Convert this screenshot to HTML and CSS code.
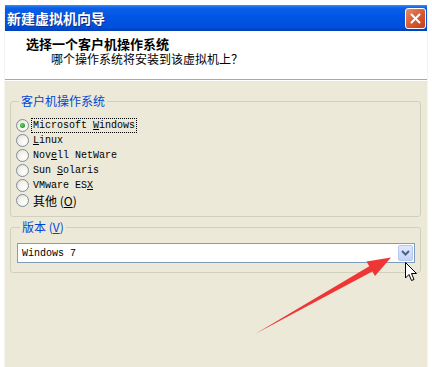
FILE: index.html
```html
<!DOCTYPE html>
<html lang="zh-CN">
<head>
    <meta charset="UTF-8">
    <title>新建虚拟机向导</title>
    <link rel="stylesheet" href="styles.css">
</head>
<body>
    <div class="window">
        <div class="titlebar">
            <span class="title">新建虚拟机向导</span>
            <span class="close">
                <svg width="11" height="11" viewBox="0 0 11 11"><path d="M1.5 1.5 L9.5 9.5 M9.5 1.5 L1.5 9.5" stroke="#fff" stroke-width="2" stroke-linecap="round"/></svg>
            </span>
        </div>

        <div class="header">
            <h1>选择一个客户机操作系统</h1>
            <p>哪个操作系统将安装到该虚拟机上？</p>
        </div>

        <div class="content">
            <fieldset class="group">
                <legend>客户机操作系统</legend>
                <div class="radios">
                    <label class="radio checked"><span class="dot"></span><span class="label focus">Microsoft <u>W</u>indows</span></label>
                    <label class="radio"><span class="dot"></span><span class="label"><u>L</u>inux</span></label>
                    <label class="radio"><span class="dot"></span><span class="label">Nov<u>e</u>ll NetWare</span></label>
                    <label class="radio"><span class="dot"></span><span class="label">Sun <u>S</u>olaris</span></label>
                    <label class="radio"><span class="dot"></span><span class="label">VMware ES<u>X</u></span></label>
                    <label class="radio"><span class="dot"></span><span class="label cjk">其他 (<u>O</u>)</span></label>
                </div>
            </fieldset>

            <fieldset class="group version">
                <legend>版本 (<u>V</u>)</legend>
                <div class="combo">
                    <span class="combo-text">Windows 7</span>
                    <span class="combo-btn">
                        <svg width="9" height="6" viewBox="0 0 9 6"><path d="M1 1 L4.5 4.5 L8 1" fill="none" stroke="#4d6185" stroke-width="2"/></svg>
                    </span>
                </div>
            </fieldset>
        </div>
    </div>

    <!-- annotation arrow and mouse pointer drawn over the dialog -->
    <svg class="overlay" width="432" height="367" viewBox="0 0 432 367">
        <polygon points="255,334 369.3,266.2 366.5,261.5 391,257.5 375,276 372.3,271.4" fill="#ef3535"/>
        <path d="M405.5 262.5 L405.5 278 L409 274.5 L411.5 280.5 L414 279.5 L411.5 273.5 L416.5 273.5 Z" fill="#fff" stroke="#000" stroke-width="1" stroke-linejoin="miter"/>
    </svg>
</body>
</html>
```

FILE: styles.css
```css
:root {
    --beige: #ece9d8;
    --group-border: #d0d0bf;
    --legend: #0046d5;
    --combo-border: #7f9db9;
}
body {
    margin: 0;
    background: #fff;
    font-family: "Noto Sans CJK SC", sans-serif;
    font-size: 12px;
    color: #000;
    position: relative;
    height: 367px;
    overflow: hidden;
}
.window {
    margin: 5px 0 0 4px;
    width: 424px;
    height: 362px;
    background: var(--beige);
    border-left: 1px solid #f4f3ee;
    border-right: 1px solid #f4f3ee;
    box-sizing: border-box;
}
.titlebar {
    height: 26px;
    display: flex;
    align-items: center;
    justify-content: space-between;
    padding: 0 1px 0 2px;
    background: linear-gradient(#3a8cf6 0, #0b60e8 3px, #0055e5 45%, #004fdc 85%, #0040b8 100%);
}
.title {
    color: #fff;
    font-weight: bold;
    font-size: 14px;
    line-height: 16px;
    text-shadow: 1px 1px 0 #0a2f8c;
}
.close {
    width: 21px;
    height: 21px;
    box-sizing: border-box;
    border: 1px solid #fff;
    border-radius: 3px;
    background: linear-gradient(135deg, #e98a6a 0, #d9582f 55%, #c2401c 100%);
    display: flex;
    align-items: center;
    justify-content: center;
}
.header {
    background: #fff;
    height: 49px;
    padding: 6px 0 0 21px;
    box-sizing: border-box;
    border-bottom: 1px solid #aca899;
}
.header h1 {
    margin: 0;
    font-size: 13px;
    line-height: 14px;
    font-weight: bold;
}
.header p {
    margin: 1px 0 0 25px;
    font-size: 12px;
    line-height: 14px;
}
.content {
    border-top: 1px solid #fff;
    padding: 13px 6px 0 5px;
    display: flex;
    flex-direction: column;
    gap: 3px;
}
.group {
    margin: 0;
    padding: 10px 0 8px 5px;
    border: 1px solid var(--group-border);
    border-radius: 3px;
    min-width: 0;
}
.group legend {
    margin-left: 3px;
    padding: 0 2px;
    color: var(--legend);
    font-size: 12px;
    line-height: 14px;
}
.radios { display: flex; flex-direction: column; }
.radio {
    height: 15px;
    display: flex;
    align-items: center;
    gap: 3px;
}
.dot {
    width: 13px;
    height: 13px;
    box-sizing: border-box;
    border-radius: 50%;
    border: 1px solid #7d8ea3;
    background: radial-gradient(circle at 65% 65%, #fff 0, #f1efe6 55%, #d8d6c8 100%);
    position: relative;
}
.checked .dot::after {
    content: "";
    position: absolute;
    left: 3px;
    top: 3px;
    width: 5px;
    height: 5px;
    border-radius: 50%;
    background: radial-gradient(circle at 40% 40%, #6fd36f 0, #2aa52a 60%, #1b8a1b 100%);
}
.label {
    font-family: "Liberation Mono", "Noto Sans CJK SC", monospace;
    font-size: 10px;
    line-height: 13px;
    padding: 0 1px;
}
.label.cjk {
    font-family: "Noto Sans CJK SC", sans-serif;
    font-size: 12px;
}
.focus { outline: 1px dotted #000; outline-offset: 0; }
.version { padding: 9px 5px 9px 6px; }
.combo {
    height: 20px;
    box-sizing: border-box;
    border: 1px solid var(--combo-border);
    background: #fff;
    display: flex;
    align-items: center;
    justify-content: space-between;
    padding: 0 1px 0 4px;
}
.combo-text {
    font-family: "Liberation Mono", monospace;
    font-size: 10px;
}
.combo-btn {
    width: 15px;
    height: 16px;
    box-sizing: border-box;
    border: 1px solid #b7c8ec;
    border-radius: 2px;
    background: linear-gradient(#dfe8fd, #c3d3fb);
    display: flex;
    align-items: center;
    justify-content: center;
}
.overlay {
    position: absolute;
    left: 0;
    top: 0;
    pointer-events: none;
}
```
